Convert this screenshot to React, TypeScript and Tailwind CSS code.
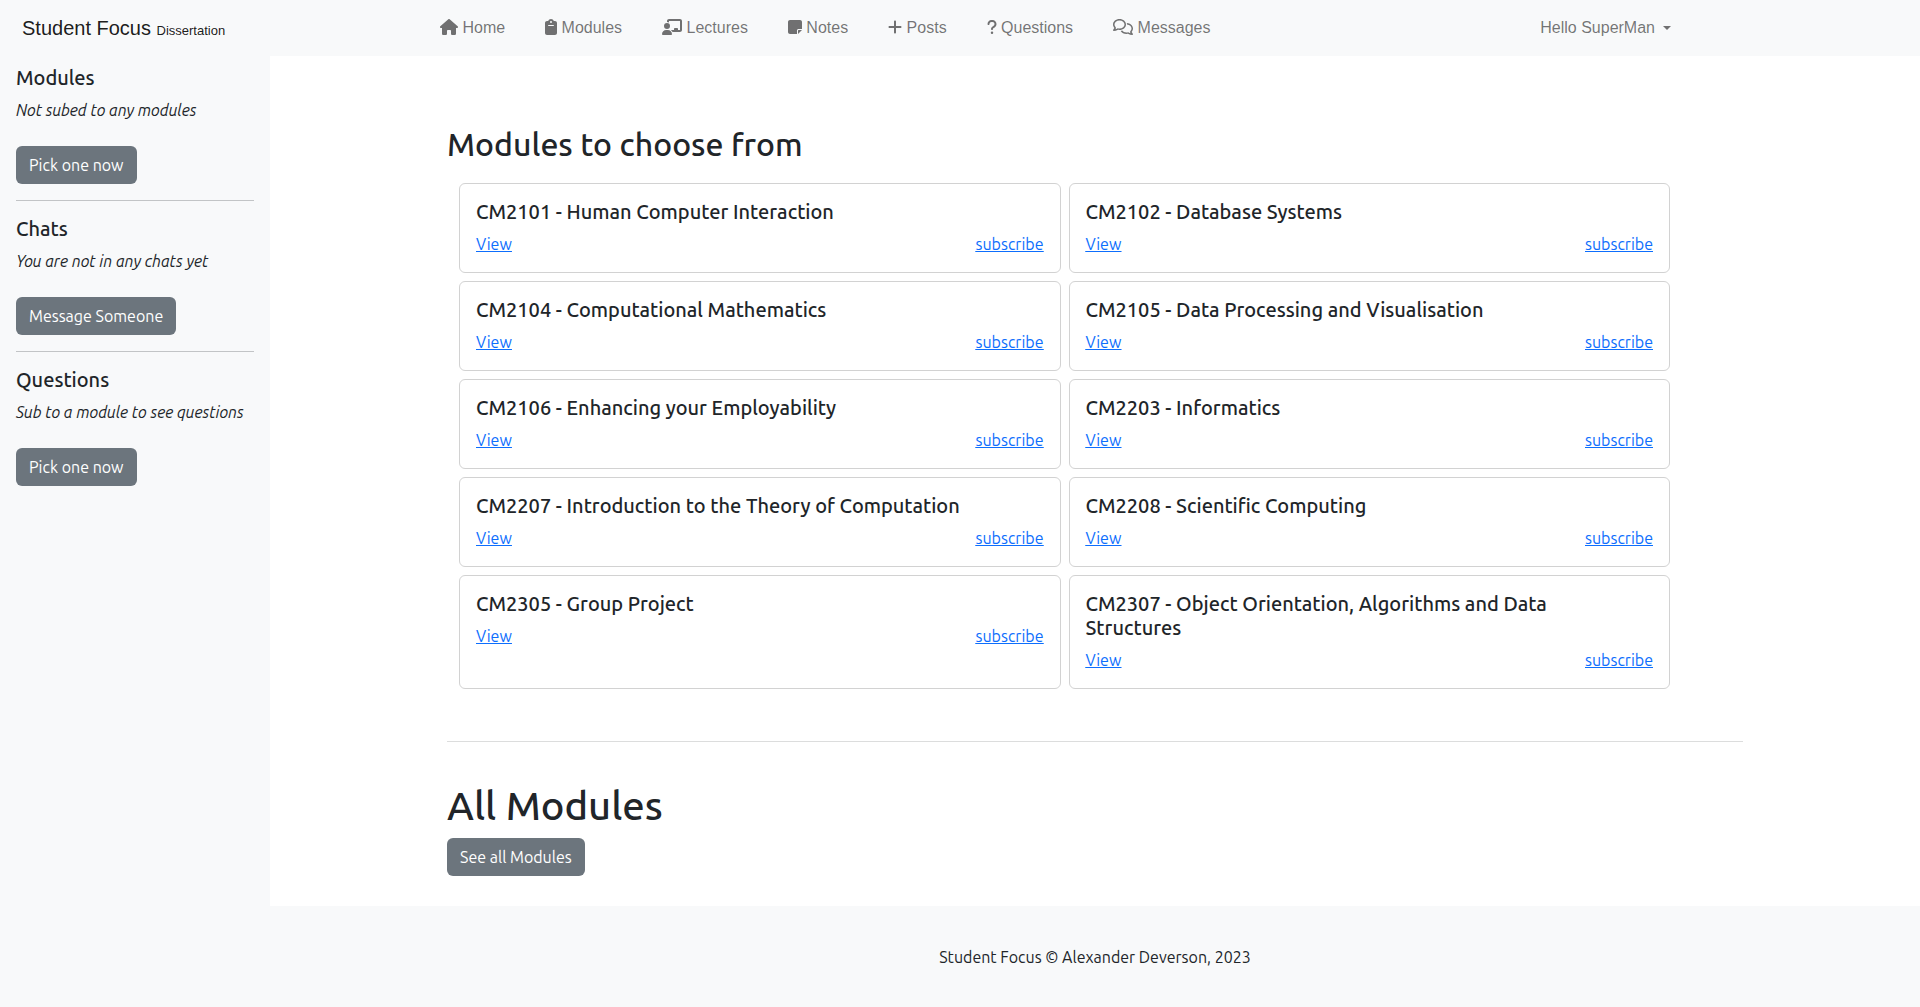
import type { IconType } from "react-icons";
import {
  FaChalkboardUser,
  FaClipboard,
  FaHouse,
  FaNoteSticky,
  FaPlus,
  FaQuestion,
  FaRegComments,
} from "react-icons/fa6";

const navItems: { label: string; icon: IconType; size: string }[] = [
  { label: "Home", icon: FaHouse, size: "w-[18px]" },
  { label: "Modules", icon: FaClipboard, size: "w-[12px]" },
  { label: "Lectures", icon: FaChalkboardUser, size: "w-[20px]" },
  { label: "Notes", icon: FaNoteSticky, size: "w-[14px]" },
  { label: "Posts", icon: FaPlus, size: "w-[14px]" },
  { label: "Questions", icon: FaQuestion, size: "w-[10px]" },
  { label: "Messages", icon: FaRegComments, size: "w-[20px]" },
];

const sideSections = [
  { title: "Modules", note: "Not subed to any modules", action: "Pick one now" },
  { title: "Chats", note: "You are not in any chats yet", action: "Message Someone" },
  { title: "Questions", note: "Sub to a module to see questions", action: "Pick one now" },
];

const modules = [
  "CM2101 - Human Computer Interaction",
  "CM2102 - Database Systems",
  "CM2104 - Computational Mathematics",
  "CM2105 - Data Processing and Visualisation",
  "CM2106 - Enhancing your Employability",
  "CM2203 - Informatics",
  "CM2207 - Introduction to the Theory of Computation",
  "CM2208 - Scientific Computing",
  "CM2305 - Group Project",
  "CM2307 - Object Orientation, Algorithms and Data Structures",
];

function Button({ children }: { children: string }) {
  return (
    <button
      type="button"
      className="h-[38px] cursor-pointer rounded-md bg-[#6c757d] px-[13px] text-base text-white"
    >
      {children}
    </button>
  );
}

function Header() {
  return (
    <header className="flex h-14 items-center bg-[#f8f9fa] font-['Liberation_Sans',Arial,sans-serif] text-black/55">
      <a href="#home" className="w-[270px] shrink-0 pl-[22px] text-xl text-black/90">
        Student Focus <small className="text-[13px]">Dissertation</small>
      </a>
      <div className="mx-auto flex w-full max-w-[1320px] items-center justify-between pr-21 pl-[5px]">
        <nav className="flex gap-10">
          {navItems.map(({ label, icon: Icon, size }) => (
            <a key={label} href={`#${label.toLowerCase()}`} className="whitespace-nowrap">
              <Icon className={`${size} inline h-4 align-[-2px]`} /> {label}
            </a>
          ))}
        </nav>
        <button type="button" className="flex cursor-pointer items-center gap-2 whitespace-nowrap">
          Hello SuperMan
          <span className="border-x-4 border-t-4 border-x-transparent border-t-current" />
        </button>
      </div>
    </header>
  );
}

function Sidebar() {
  return (
    <aside className="w-[270px] shrink-0 bg-[#f8f9fa] px-4 pt-[10px]">
      {sideSections.map((s, i) => (
        <section key={s.title}>
          {i > 0 && <hr className="my-4 border-[#c2c4c6]" />}
          <h2 className="mb-2 text-xl leading-6 font-medium">{s.title}</h2>
          <p className="mb-6 whitespace-nowrap italic">{s.note}</p>
          <Button>{s.action}</Button>
        </section>
      ))}
    </aside>
  );
}

function ModuleCard({ name }: { name: string }) {
  return (
    <article className="rounded-md border border-[#d2d2d2] bg-white p-4">
      <h3 className="mb-2 pr-4 text-xl leading-6 font-medium">{name}</h3>
      <div className="flex justify-between text-[#0d6efd] underline">
        <a href="#view">View</a>
        <a href="#subscribe">subscribe</a>
      </div>
    </article>
  );
}

export default function App() {
  return (
    <div className="flex min-h-screen flex-col bg-white font-[Ubuntu,'Noto_Sans',sans-serif] text-base text-[#212529]">
      <Header />
      <div className="flex grow">
        <Sidebar />
        <div className="flex min-w-0 grow flex-col">
          <main className="mx-auto w-full max-w-[1320px] px-3 pt-[69px] pb-[30px]">
            <h1 className="mb-5 text-[32px] leading-[38px] font-medium">
              Modules to choose from
            </h1>
            <div className="grid grid-cols-2 gap-2 pr-[73px] pl-3">
              {modules.map((name) => (
                <ModuleCard key={name} name={name} />
              ))}
            </div>
            <hr className="mt-[52px] mb-10 border-[#dcdddd]" />
            <h2 className="mb-2 text-[40px] leading-[48px] font-medium">All Modules</h2>
            <Button>See all Modules</Button>
          </main>
          <footer className="flex grow items-center justify-center bg-[#f8f9fa] py-9">
            Student Focus © Alexander Deverson, 2023
          </footer>
        </div>
      </div>
    </div>
  );
}
